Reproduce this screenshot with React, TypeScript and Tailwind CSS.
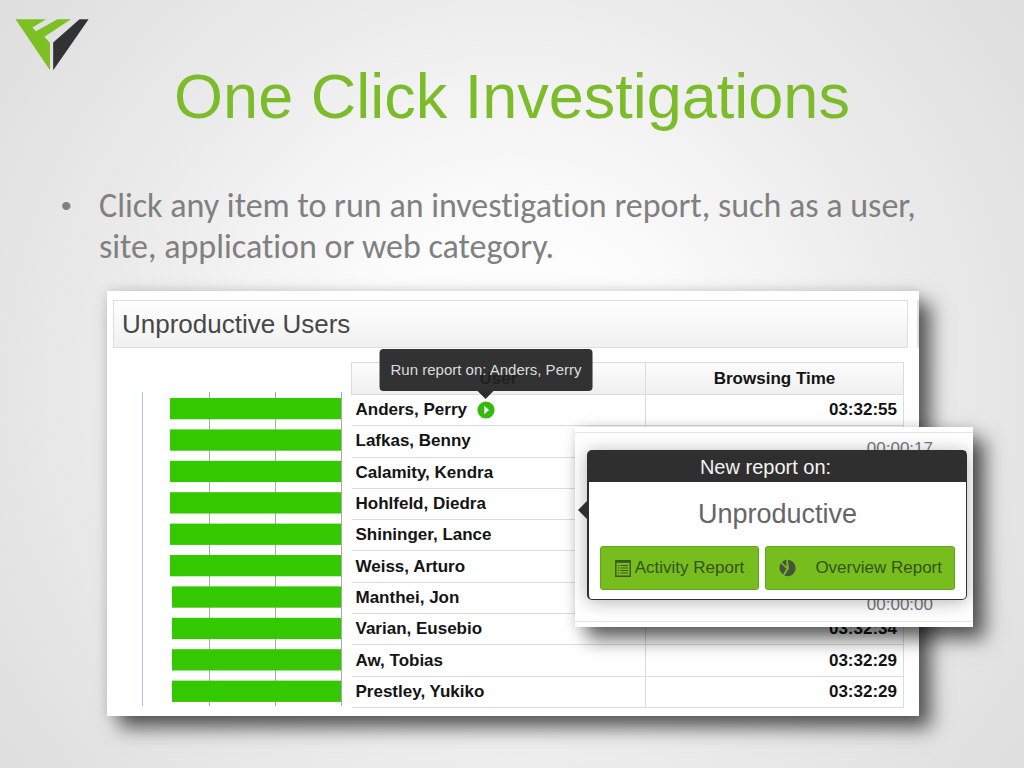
import React from "react";

const users = [
  { name: "Anders, Perry", time: "03:32:55", start: 28 },
  { name: "Lafkas, Benny", time: "", start: 28 },
  { name: "Calamity, Kendra", time: "", start: 28 },
  { name: "Hohlfeld, Diedra", time: "", start: 28 },
  { name: "Shininger, Lance", time: "", start: 28 },
  { name: "Weiss, Arturo", time: "", start: 28 },
  { name: "Manthei, Jon", time: "", start: 30 },
  { name: "Varian, Eusebio", time: "03:32:34", start: 30 },
  { name: "Aw, Tobias", time: "03:32:29", start: 30 },
  { name: "Prestley, Yukiko", time: "03:32:29", start: 30 },
];

function Logo() {
  return (
    <svg width="74" height="52" viewBox="15 19 74 52" role="img" aria-label="Company logo">
      <path d="M15.5 19.3H46L32.3 27.5 36 31.2 57.5 19.3H71L44.5 36.7 50 43V70.3Z" fill="#7cc024" />
      <path d="M88.6 19.3H79.5L53.2 42.5V70.3Z" fill="#323236" />
    </svg>
  );
}

function BarChart() {
  return (
    <svg className="mb-0.5" width="202" height="314" viewBox="0 0 202 314" role="img" aria-label="Browsing time per user">
      <path d="M.5 0V314" stroke="#b4c2d2" />
      <path d="M67.5 0V314M133.5 0V314M199.5 0V314" stroke="#a9a9b4" />
      {users.map((u, i) => (
        <rect key={u.name} x={u.start} y={6 + i * 31.4} width={199 - u.start} height="21.3" fill="#33c800" />
      ))}
    </svg>
  );
}

function Tooltip() {
  return (
    <div
      role="tooltip"
      className="absolute bottom-full left-1/2 z-10 mb-2.5 -translate-x-1/2 whitespace-nowrap rounded bg-[#222222]/93 px-[11px] py-3 text-[15px] font-normal leading-[18px] text-[#dddddd]"
    >
      Run report on: Anders, Perry
      <svg className="absolute left-1/2 top-full -translate-x-1/2" width="16" height="8" viewBox="0 0 16 8" aria-hidden="true">
        <path d="M0 0H16L8 8Z" fill="#2d2d2d" />
      </svg>
    </div>
  );
}

function UserTable() {
  return (
    <table className="h-[346px] flex-1 table-fixed border-collapse text-[17px] font-bold leading-5 text-[#141414]">
      <thead>
        <tr className="h-8 bg-linear-to-b from-[#fcfcfc] to-[#efefef]">
          <th className="w-[294px] border border-[#dcdcdc] text-black">User</th>
          <th className="border border-[#dcdcdc]">Browsing Time</th>
        </tr>
      </thead>
      <tbody>
        {users.map((u, i) => (
          <tr key={u.name} className="border-b border-[#dcdcdc]">
            <td className="border-r border-[#dcdcdc] px-1">
              <span className="flex items-center gap-2.5">
                {u.name}
                {i === 0 && (
                  <span className="relative flex">
                    <button type="button" aria-label="Run report on Anders, Perry">
                      <svg className="block" width="18" height="18" viewBox="0 0 18 18" aria-hidden="true">
                        <circle cx="9" cy="9" r="8.6" fill="#35b90c" />
                        <path d="M7.4 4.8 12 9 7.4 13.2Z" fill="#fff" />
                      </svg>
                    </button>
                    <Tooltip />
                  </span>
                )}
              </span>
            </td>
            <td className="border-r border-[#dcdcdc] px-1.5 text-right">{u.time}</td>
          </tr>
        ))}
      </tbody>
    </table>
  );
}

function ReportPopup() {
  return (
    <div className="absolute -right-[54px] top-[136px] z-20 flex h-[200px] w-[398px] flex-col bg-white py-[5px] font-normal shadow-[12px_12px_18px_rgba(0,0,0,0.62),0_0_12px_rgba(0,0,0,0.12)]">
      <div className="flex flex-1 flex-col justify-between border-y border-[#e6e6e6] bg-white pb-1.5 pr-10 pt-1.5 text-right text-[17px] leading-5 text-[#77777c]">
        <span>00:00:17</span>
        <span>00:00:00</span>
      </div>
      <section
        aria-label="New report"
        className="absolute left-3 right-1.5 top-[23px] h-[150px] rounded-[5px] border border-l-2 border-[#2f2f2f] bg-white shadow-[0_2px_18px_rgba(0,0,0,0.3)]"
      >
        <svg className="absolute -left-[11px] top-[49px]" width="10" height="20" viewBox="0 0 10 20" aria-hidden="true">
          <path d="M10 0V20L0 10Z" fill="#2f2f2f" />
        </svg>
        <h3 className="h-[31px] bg-[#2f2f2f] text-center text-[20px] leading-8 text-[#f3f3f3]">
          <span className="pr-6">New report on:</span>
        </h3>
        <p className="pt-4 text-center text-[27px] leading-8 text-[#68646a]">Unproductive</p>
        <div className="mt-4 flex gap-1.5 px-[11px] text-[17px] text-[#35531a]">
          <button type="button" className="flex h-11 w-[159px] items-center justify-center gap-1 whitespace-nowrap rounded-[3px] border border-[#63a31c] bg-[#77bd1d]">
            <svg width="16" height="17" viewBox="0 0 16 17" fill="none" stroke="#3d5722" aria-hidden="true">
              <path d="M.8 .8H15.2V16.2H.8Z" strokeWidth="1.4" />
              <path d="M1 1.8H15" strokeWidth="2" />
              <path d="M5.5 5.5H13M5.5 8H13M5.5 10.5H13M5.5 13H13M2.8 5.5H4.3M2.8 8H4.3M2.8 10.5H4.3M2.8 13H4.3" strokeWidth="1.2" />
            </svg>
            Activity Report
          </button>
          <button type="button" className="flex h-11 flex-1 items-center justify-between whitespace-nowrap rounded-[3px] border border-[#63a31c] bg-[#77bd1d] px-3">
            <svg width="18" height="18" viewBox="0 0 18 18" fill="#47533e" aria-hidden="true">
              <path d="M9.8 .8A8.2 8.2 0 0 1 9.2 17.2L6.3 16.5 11 9.5Z" />
              <path d="M8.4 .8V7.5L4 3.2A8 8 0 0 1 8.4 .8Z" />
              <path d="M2.9 4.2 8.5 9.8 5 15.6A8.2 8.2 0 0 1 2.9 4.2Z" />
            </svg>
            Overview Report
          </button>
        </div>
      </section>
    </div>
  );
}

export default function App() {
  return (
    <main className="min-h-screen overflow-hidden bg-[radial-gradient(circle_at_50%_50%,#ffffff_0%,#fcfcfc_25%,#eaeaea_65%,#dedede_100%)] pb-[52px] font-['Liberation_Sans',Arial,sans-serif]">
      <header className="grid">
        <div className="col-start-1 row-start-1 pl-[15px] pt-[19px]">
          <Logo />
        </div>
        <h1 className="col-start-1 row-start-1 pt-[60px] text-center text-[63px] leading-[72px] text-[#7cbb2a]">
          One Click Investigations
        </h1>
      </header>

      <ul className="mt-[53px] pl-[61px] pr-20 font-[Carlito,Lato,sans-serif] text-[34px] leading-[41px] text-[#808080] [font-variant-ligatures:none]">
        <li className="flex">
          <span aria-hidden="true" className="w-[38px] shrink-0 font-['Liberation_Sans',sans-serif] text-[30px]">•</span>
          <span>Click any item to run an investigation report, such as a user, site, application or web category.</span>
        </li>
      </ul>

      <section
        aria-label="Unproductive Users"
        className="relative ml-[107px] mr-[105px] mt-6 bg-white pb-2 pl-1.5 pt-[9px] shadow-[12px_12px_18px_rgba(0,0,0,0.62),0_0_12px_rgba(0,0,0,0.12)]"
      >
        <div className="flex gap-[9px]">
          <h2 className="h-12 flex-1 border border-[#dedede] bg-linear-to-b from-white to-[#f0f0f0] pl-2 text-[26px] leading-[46px] text-[#474747]">
            Unproductive Users
          </h2>
          <div className="w-0.5 bg-[#e2e2e2]" />
        </div>
        <div className="mt-3.5 flex items-end gap-[7px] pl-[29px] pr-[15px]">
          <BarChart />
          <UserTable />
        </div>
        <ReportPopup />
      </section>
    </main>
  );
}
